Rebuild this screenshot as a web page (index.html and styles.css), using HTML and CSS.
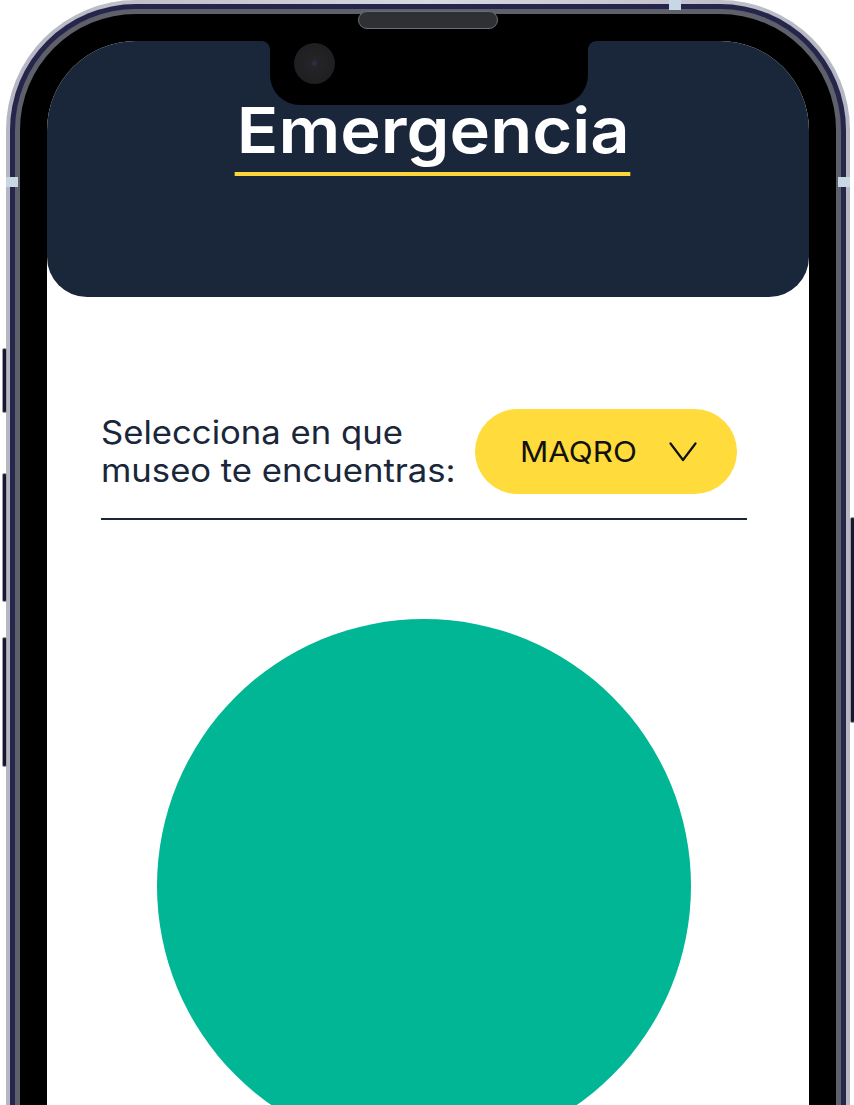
FILE: index.html
```html
<!DOCTYPE html>
<html lang="es">
<head>
<meta charset="utf-8">
<title>Emergencia</title>
<link rel="stylesheet" href="styles.css">
</head>
<body>
<div class="phone">
  <div class="frame-navy">
    <div class="frame-gray">
      <div class="bezel">
        <div class="screen">
          <div class="notch"><span class="camera"></span></div>
          <header class="header">
            <h1 class="title">Emergencia</h1>
          </header>
          <main class="content">
            <div class="select-row">
              <p class="prompt">Selecciona en que<br>museo te encuentras:</p>
              <button class="pill" type="button">
                <span class="pill-label">MAQRO</span>
                <svg class="chevron" width="28" height="20" viewBox="0 0 28 20" aria-hidden="true">
                  <polyline points="1.5,1.5 14,18 26.5,1.5" fill="none" stroke="#111" stroke-width="2.2" stroke-linecap="round" stroke-linejoin="round"/>
                </svg>
              </button>
            </div>
            <hr class="divider">
            <div class="circle"></div>
          </main>
        </div>
      </div>
    </div>
  </div>
  <span class="speaker"></span>
  <span class="side-btn btn-l1"></span>
  <span class="side-btn btn-l2"></span>
  <span class="side-btn btn-l3"></span>
  <span class="side-btn btn-r1"></span>
  <span class="band band-l"></span>
  <span class="band band-r"></span>
  <span class="band band-t"></span>
</div>
</body>
</html>
```

FILE: styles.css
```css
html, body {
  margin: 0;
  padding: 0;
  background: #ffffff;
  overflow: hidden;
}

body {
  font-family: "Inter", "Noto Sans", "Liberation Sans", sans-serif;
}

.phone {
  position: relative;
  box-sizing: border-box;
  width: 844px;
  height: 1400px;
  margin-left: 6px;
  padding: 4px;
  border-radius: 130px;
  background: linear-gradient(90deg, #b4b7c1 0%, #d6d9e0 50%, #b4b7c1 100%);
}

.frame-navy {
  box-sizing: border-box;
  height: 100%;
  padding: 5px;
  border-radius: 126px;
  background: #26254b;
}

.frame-gray {
  box-sizing: border-box;
  height: 100%;
  padding: 5px;
  border-radius: 121px;
  background: #5e6169;
}

.bezel {
  box-sizing: border-box;
  height: 100%;
  padding: 27px;
  border-radius: 116px;
  background: #000000;
}

.screen {
  position: relative;
  height: 100%;
  border-radius: 89px;
  background: #ffffff;
  overflow: hidden;
}

/* notch */
.notch {
  position: absolute;
  top: 0;
  left: 223px;
  width: 318px;
  height: 64px;
  background: #000000;
  border-radius: 0 0 30px 30px;
  z-index: 2;
}

.notch::before,
.notch::after {
  content: "";
  position: absolute;
  top: 0;
  width: 8px;
  height: 8px;
}

.notch::before {
  left: -8px;
  background: radial-gradient(circle at 0 100%, transparent 7.5px, #000 8px);
}

.notch::after {
  right: -8px;
  background: radial-gradient(circle at 100% 100%, transparent 7.5px, #000 8px);
}

.camera {
  position: absolute;
  left: 24px;
  top: 2px;
  width: 41px;
  height: 41px;
  border-radius: 50%;
  background: radial-gradient(circle at 50% 50%, #2c2c48 0 2px, #252528 3px, #1c1c1e 100%);
}

/* header */
.header {
  box-sizing: border-box;
  height: 256px;
  padding-top: 58px;
  display: flex;
  justify-content: center;
  align-items: flex-start;
  background: #1a2639;
  border-radius: 0 0 40px 40px;
}

.title {
  margin: 0 0 0 10px;
  padding: 0 1px 10px 2px;
  font-size: 63px;
  font-weight: 600;
  line-height: 1;
  color: #ffffff;
  border-bottom: 4px solid #fdd63a;
  transform: scaleX(1.09);
}

/* content */
.content {
  padding: 112px 62px 0 54px;
}

.select-row {
  display: flex;
  align-items: center;
  justify-content: space-between;
}

.prompt {
  margin: 0;
  font-size: 32px;
  line-height: 38px;
  font-weight: 400;
  color: #1a2639;
  transform: scaleX(1.083);
  transform-origin: left center;
}

.pill {
  box-sizing: border-box;
  width: 262px;
  height: 85px;
  margin-right: 10px;
  padding: 0 40px 0 45px;
  display: flex;
  align-items: center;
  justify-content: space-between;
  border: 0;
  border-radius: 43px;
  background: #ffdb3b;
  font-family: inherit;
  font-size: 29px;
  font-weight: 400;
  color: #111111;
}

.pill-label {
  transform: scaleX(1.08);
  transform-origin: left center;
}

.chevron {
  display: block;
}

.divider {
  height: 2px;
  margin: 24px 0 0;
  border: 0;
  background: #1a2639;
}

.circle {
  width: 534px;
  height: 534px;
  margin: 99px 0 0 56px;
  border-radius: 50%;
  background: #00b695;
}

/* hardware details */
.speaker {
  position: absolute;
  top: 11px;
  left: 352px;
  width: 140px;
  height: 18px;
  box-sizing: border-box;
  border-radius: 9px;
  background: #2f3033;
  border: 1.5px solid #6a6d78;
}

.side-btn {
  position: absolute;
  width: 5px;
  box-sizing: border-box;
  background: #18172e;
  border: 1px solid #9a9da7;
  border-radius: 2px;
}

.btn-l1 { left: -4px; top: 348px; height: 65px; }
.btn-l2 { left: -4px; top: 473px; height: 129px; }
.btn-l3 { left: -4px; top: 637px; height: 130px; }
.btn-r1 { right: -5px; top: 517px; height: 206px; }

.band {
  position: absolute;
  background: #c9d6e3;
}

.band-l { left: 0; top: 177px; width: 12px; height: 10px; }
.band-r { right: 0; top: 177px; width: 12px; height: 10px; }
.band-t { left: 663px; top: 0; width: 12px; height: 10px; }
```
